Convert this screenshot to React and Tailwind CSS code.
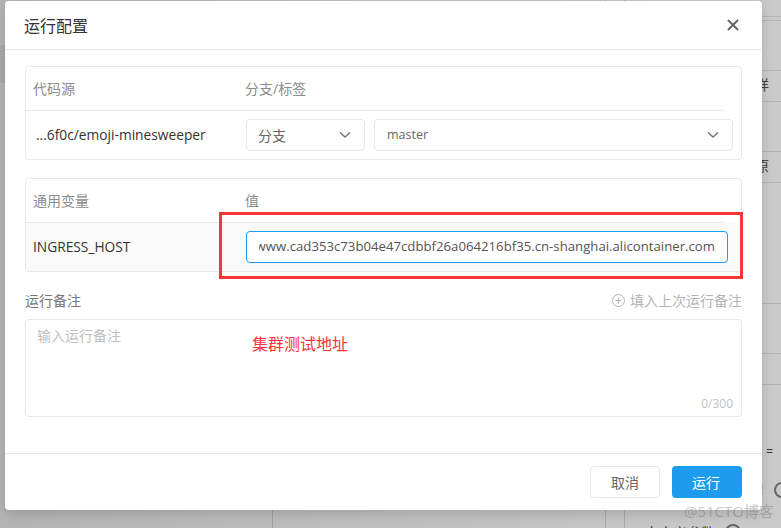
import React from "react";

const font = { fontFamily: '"Open Sans","Noto Sans CJK SC",sans-serif' };

function Chevron({ className }) {
  return (
    <svg className={className} width="12" height="8" viewBox="0 0 12 8" fill="none" stroke="#777" strokeWidth="1.5">
      <path d="M1 1.5 L6 6 L11 1.5" />
    </svg>
  );
}

function Select({ label, className, textClass }) {
  return (
    <div className={"h-[32px] rounded-[4px] border border-[#e8e8e8] bg-white flex items-center justify-between pl-[11px] pr-[13px] " + className}>
      <span className={textClass}>{label}</span>
      <Chevron />
    </div>
  );
}

function Background() {
  const lines = [16, 20, 70, 101, 151, 182, 303, 353, 384];
  return (
    <div className="absolute inset-0 overflow-hidden bg-[linear-gradient(90deg,#b4b4b4,#cacaca)]">
      {lines.map((y) => (
        <div key={y} className="absolute left-[762px] right-0 h-px bg-[#b4b4b4]" style={{ top: y }} />
      ))}
      <div className="absolute left-[272px] top-[510px] bottom-0 w-px bg-[#a0a0a0]" />
      <div className="absolute left-[605px] top-0 bottom-0 w-px bg-[#a8a8a8]" />
      <div className="absolute left-[624px] top-0 bottom-0 w-px bg-[#a8a8a8]" />
      <span className="absolute left-[755px] top-[75px] text-[14px] leading-[20px] text-[#444]">详</span>
      <span className="absolute left-[755px] top-[156px] text-[14px] leading-[20px] text-[#444]">原</span>
      <span className="absolute left-[766px] top-[444px] text-[12px] leading-[16px] text-[#333]">=</span>
      <span className="absolute left-[760px] top-[482px] text-[12px] leading-[16px] text-[#2a7fb8]">!</span>
      <span className="absolute left-[774px] top-[482px] w-[16px] h-[16px] rounded-full border-2 border-[#666]" />
      <span className="absolute left-[645px] top-[523px] text-[14px] leading-[20px] text-[#333]">自定义参数</span>
      <span className="absolute left-[725px] top-[524px] w-[16px] h-[16px] rounded-full border-2 border-[#666]" />
      <div className="absolute left-0 top-[45px] w-[5px] h-[38px] bg-[#a9a9a9]" />
    </div>
  );
}

export default function App() {
  return (
    <div className="relative w-[781px] h-[528px] overflow-hidden" style={font}>
      <Background />
      <div className="absolute left-[5px] top-[1px] w-[757px] h-[509px] bg-white rounded-[4px] shadow-[0_4px_12px_rgba(0,0,0,0.15)] flex flex-col">
        <div className="h-[49px] shrink-0 border-b border-[#e8e8e8] flex items-center justify-between pl-[19px] pr-[23px]">
          <span className="text-[16px] leading-[22px] text-[#333] mt-[1px]">运行配置</span>
          <svg width="12" height="12" viewBox="0 0 12 12" stroke="#666" strokeWidth="2" className="mb-[1px]">
            <path d="M1 1 L11 11 M11 1 L1 11" />
          </svg>
        </div>

        <div className="flex-1 pt-[16px] px-[20px] flex flex-col">
          <div className="h-[94px] rounded-[4px] border border-[#e8e8e8]">
            <div className="h-[44px] mr-[17px] border-b border-[#e8e8e8] flex items-center text-[14px] text-[#8c8c8c]">
              <span className="w-[219px] pl-[7px]">代码源</span>
              <span>分支/标签</span>
            </div>
            <div className="h-[48px] flex items-center">
              <span className="w-[220px] pl-[10px] text-[13.75px] text-[#333]">...6f0c/emoji-minesweeper</span>
              <Select label="分支" className="w-[119px] mr-[9px]" textClass="text-[14px] text-[#666]" />
              <Select label="master" className="w-[359px]" textClass="text-[12.5px] text-[#666] pl-[1px] pt-[1px]" />
            </div>
          </div>

          <div className="relative h-[94px] mt-[18px] rounded-[4px] border border-[#e8e8e8]">
            <div className="h-[44px] mr-[17px] border-b border-[#e8e8e8] flex items-center text-[14px] text-[#8c8c8c]">
              <span className="w-[219px] pl-[7px]">通用变量</span>
              <span>值</span>
            </div>
            <div className="h-[48px] bg-[#fafafa] flex items-center">
              <span className="w-[220px] pl-[7px] text-[13.75px] text-[#333]">INGRESS_HOST</span>
              <div className="w-[482px] h-[32px] rounded-[4px] border border-[#1d9cee] bg-white px-[12px] flex items-center">
                <div className="w-full flex justify-end overflow-hidden">
                  <span className="shrink-0 text-[13.2px] text-[#555] whitespace-nowrap">www.cad353c73b04e47cdbbf26a064216bf35.cn-shanghai.alicontainer.com</span>
                </div>
              </div>
            </div>
            <div className="absolute left-[193px] top-[33px] w-[524px] h-[67px] border-[3px] border-[#fb3535]" />
          </div>

          <div className="flex items-center justify-between mt-[17px] h-[22px]">
            <span className="text-[14px] text-[#777]">运行备注</span>
            <span className="flex items-center gap-[5px] text-[14px] text-[#b5b5b5]">
              <svg width="13" height="13" viewBox="0 0 13 13" fill="none" stroke="#b5b5b5" strokeWidth="1">
                <circle cx="6.5" cy="6.5" r="6" />
                <path d="M3.5 6.5 H9.5 M6.5 3.5 V9.5" />
              </svg>
              填入上次运行备注
            </span>
          </div>

          <div className="relative h-[98px] mt-[8px] rounded-[4px] border border-[#e8e8e8]">
            <span className="absolute left-[11px] top-[5px] text-[14px] text-[#bfbfbf]">输入运行备注</span>
            <span className="absolute left-[226px] top-[12px] text-[16px] text-[#fb3535]">集群测试地址</span>
            <span className="absolute right-[8px] bottom-[3px] text-[12px] text-[#bfbfbf]">0/300</span>
          </div>
        </div>

        <div className="h-[57px] shrink-0 border-t border-[#e8e8e8] flex items-start justify-end gap-[12px] pt-[12px] pr-[20px]">
          <button className="w-[70px] h-[32px] rounded-[4px] border border-[#e8e8e8] bg-white text-[14px] text-[#666]">取消</button>
          <button className="w-[70px] h-[32px] rounded-[4px] bg-[#1d9cee] text-[14px] text-white pr-[2px]">运行</button>
        </div>
      </div>
      <span className="absolute left-[684px] top-[500px] text-[15px] leading-[22px] text-[rgba(110,110,110,0.4)]">@51CTO博客</span>
    </div>
  );
}
